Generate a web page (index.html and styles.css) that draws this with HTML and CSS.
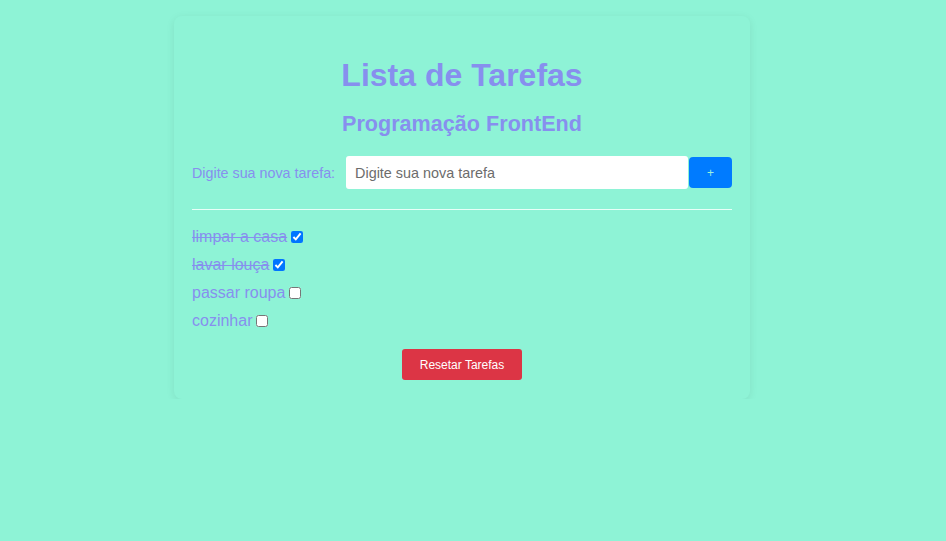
FILE: index.html
```html
<!DOCTYPE html>
<html lang="pt-BR">
<head>
<meta charset="utf-8">
<title>Lista de Tarefas</title>
<link rel="stylesheet" href="styles.css">
</head>
<body>
<div class="page">
  <div class="card">
    <h1 class="title">Lista de Tarefas</h1>
    <h2 class="subtitle">Programação FrontEnd</h2>
    <form class="add-form">
      <label class="add-label" for="nova">Digite sua nova tarefa:</label>
      <input class="add-input" id="nova" type="text" placeholder="Digite sua nova tarefa">
      <button class="add-btn" type="button">+</button>
    </form>
    <hr class="divider">
    <ul class="tasks">
      <li class="task done">limpar a casa <input type="checkbox" checked></li>
      <li class="task done">lavar louça <input type="checkbox" checked></li>
      <li class="task">passar roupa <input type="checkbox"></li>
      <li class="task">cozinhar <input type="checkbox"></li>
    </ul>
    <div class="actions">
      <button class="reset-btn" type="button">Resetar Tarefas</button>
    </div>
  </div>
</div>
</body>
</html>
```
FILE: styles.css
```css
html, body {
  margin: 0;
  padding: 0;
}
body {
  background: #8ef3d6;
  font-family: "Liberation Sans", Arial, sans-serif;
  color: #878fee;
}
.page {
  width: 924px;
  padding-top: 16px;
}
.card {
  width: 540px;
  margin: 0 auto;
  padding: 20px 18px 19px;
  background: #8ef3d6;
  border-radius: 8px;
  box-shadow: 0 2px 8px rgba(0, 0, 0, 0.08);
}
.title {
  margin: 21px 0 16px;
  font-size: 32px;
  line-height: 37px;
  text-align: center;
  font-weight: bold;
}
.subtitle {
  margin: 0 0 18px;
  font-size: 21.6px;
  line-height: 28px;
  text-align: center;
  font-weight: bold;
}
.add-form {
  display: flex;
  align-items: center;
  margin: 0;
}
.add-label {
  font-size: 14.3px;
  margin-right: 11px;
  white-space: nowrap;
}
.add-input {
  flex: 1;
  height: 33px;
  box-sizing: border-box;
  border: none;
  border-radius: 3px;
  padding: 0 9px;
  font-family: "Liberation Sans", Arial, sans-serif;
  font-size: 14.4px;
  color: #555;
  background: #fff;
  outline: none;
}
.add-input::placeholder {
  color: #6c6c6c;
}
.add-btn {
  width: 43px;
  height: 31px;
  margin-left: 1px;
  border: none;
  border-radius: 4px;
  background: #007bff;
  color: #9ff0dc;
  font-size: 12px;
  font-family: "Liberation Sans", Arial, sans-serif;
}
.divider {
  margin: 20px 0 13px;
  border: none;
  border-top: 1px solid #e8fff8;
  height: 0;
}
.tasks {
  list-style: none;
  margin: 0;
  padding: 0;
}
.task {
  font-size: 16px;
  line-height: 28px;
  display: flex;
  align-items: center;
}
.task input {
  margin: 0 0 0 4px;
  width: 12px;
  height: 12px;
}
.task.done {
  text-decoration: line-through;
}
.actions {
  display: flex;
  justify-content: center;
  margin-top: 14px;
}
.reset-btn {
  width: 120px;
  height: 31px;
  border: none;
  border-radius: 3px;
  background: #dc3545;
  color: #fff;
  font-size: 12px;
  font-family: "Liberation Sans", Arial, sans-serif;
}
```
